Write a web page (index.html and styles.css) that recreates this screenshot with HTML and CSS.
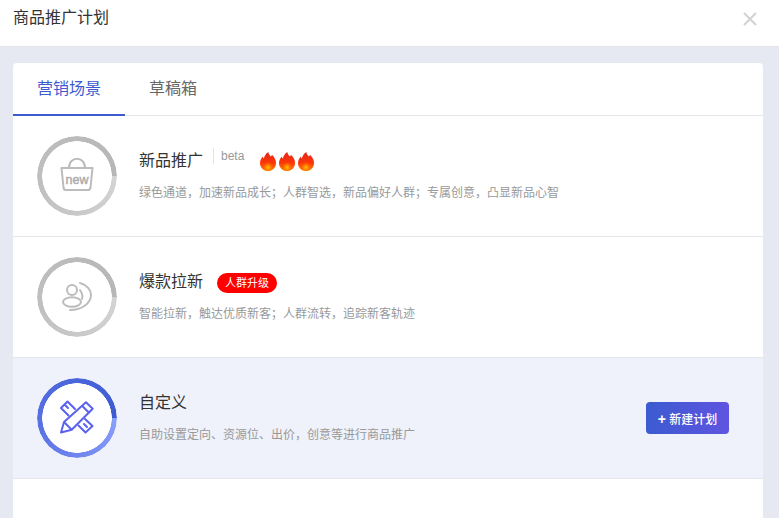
FILE: index.html
```html
<!DOCTYPE html>
<html lang="zh">
<head>
<meta charset="utf-8">
<title>商品推广计划</title>
<link rel="stylesheet" href="styles.css">
</head>
<body>
<svg class="defs" width="0" height="0" aria-hidden="true">
  <defs>
    <linearGradient id="flame" x1="0" y1="0" x2="0" y2="1">
      <stop offset="0" stop-color="#e5271c"/>
      <stop offset="0.55" stop-color="#fb3408"/>
      <stop offset="1" stop-color="#ff8000"/>
    </linearGradient>
    <radialGradient id="flame-core" cx="0.5" cy="0.6" r="0.55">
      <stop offset="0" stop-color="#ffc400"/>
      <stop offset="1" stop-color="#ff7a00" stop-opacity="0.2"/>
    </radialGradient>
    <symbol id="fire" viewBox="0 0 16 19">
      <path fill="url(#flame)" d="M8.300 0C8.600 2.200 10 3.400 11 4.600 11.500 4.100 11.800 3.500 11.900 2.800 14.300 5 16 7.600 16 10.900 16 15.400 12.500 19 8 19S0 15.400 0 10.900C0 8.300 1.200 6.200 2.700 4.400 2.900 5.300 3.200 6 3.800 6.600 4.300 4.200 5.900 1.500 8.300 0Z"/>
      <ellipse cx="8" cy="14.500" rx="4" ry="4.300" fill="url(#flame-core)"/>
    </symbol>
  </defs>
</svg>
<header class="topbar">
  <h1 class="title">商品推广计划</h1>
  <svg class="close" viewBox="0 0 14 14" width="14" height="14" aria-label="关闭"><path d="M1 1L13 13M13 1L1 13"/></svg>
</header>
<main class="card">
  <nav class="tabs">
    <a class="tab tab-active">营销场景</a>
    <a class="tab">草稿箱</a>
  </nav>

  <section class="row">
    <div class="ring ring-grey">
      <svg class="ring-icon" viewBox="0 0 40 40" width="40" height="40">
        <path class="ic-grey" d="M12 12C12 -0.500 28 -0.500 28 12"/>
        <path class="ic-grey" d="M4.500 12H35.500L33.500 31.500C33.300 33 32.400 34 31 34H9C7.600 34 6.700 33 6.500 31.500Z"/>
        <text class="new-text" x="20" y="27.500" text-anchor="middle">new</text>
      </svg>
    </div>
    <div class="info">
      <div class="head">
        <h2 class="name">新品推广</h2>
        <span class="beta">beta</span>
        <span class="fires">
          <svg class="fire" width="16" height="19"><use href="#fire"/></svg>
          <svg class="fire" width="16" height="19"><use href="#fire"/></svg>
          <svg class="fire" width="16" height="19"><use href="#fire"/></svg>
        </span>
      </div>
      <p class="desc">绿色通道，加速新品成长；人群智选，新品偏好人群；专属创意，凸显新品心智</p>
    </div>
  </section>

  <section class="row">
    <div class="ring ring-grey">
      <svg class="ring-icon" viewBox="0 0 40 40" width="40" height="40">
        <circle class="ic-grey" cx="15" cy="13" r="5"/>
        <ellipse class="ic-grey" cx="15" cy="25" rx="9" ry="4.800"/>
        <path class="ic-grey" d="M23 13C25 16 26 19 25 22"/>
        <path class="ic-grey" d="M23 6C30 8 34 13 34 18 34 26 25 33 13 33"/>
      </svg>
    </div>
    <div class="info">
      <div class="head">
        <h2 class="name">爆款拉新</h2>
        <span class="pill">人群升级</span>
      </div>
      <p class="desc">智能拉新，触达优质新客；人群流转，追踪新客轨迹</p>
    </div>
  </section>

  <section class="row row-active">
    <div class="ring ring-blue">
      <svg class="ring-icon" viewBox="0 0 40 40" width="40" height="40">
        <g class="ic-blue">
          <path d="M18 11L10.500 3.500 4 10 11.500 17.500M8 7L11 10"/>
          <path d="M28 21L35.500 28 28.500 34.500 21.500 27.500M27 26L30 29"/>
          <path d="M29 4.300L35.700 10.700 14.700 31.700 4 34.500 7 24ZM25.300 8L32 14.700M7 24L14.700 31.700"/>
        </g>
      </svg>
    </div>
    <div class="info">
      <div class="head">
        <h2 class="name">自定义</h2>
      </div>
      <p class="desc">自助设置定向、资源位、出价，创意等进行商品推广</p>
    </div>
    <button class="create" type="button"><span class="plus">+</span> 新建计划</button>
  </section>
</main>
</body>
</html>
```
FILE: styles.css
```css
* { box-sizing: border-box; }
html, body { margin: 0; height: 100%; overflow: hidden; }
body {
  background: #e6e9f2;
  font-family: "Liberation Sans", "Noto Sans CJK SC", sans-serif;
  color: #333;
}
.defs { position: absolute; }
.topbar {
  height: 47px;
  background: #fff;
  border-bottom: 1px solid #e3e5ea;
  display: flex;
  align-items: flex-start;
  justify-content: space-between;
  padding: 8px 22px 0 13px;
}
.title { margin: 0; font-size: 16px; font-weight: 400; line-height: 20px; color: #333; }
.close { margin-top: 4px; }
.close path { stroke: #d2d2d4; stroke-width: 2; fill: none; }
.card {
  margin: 16px 16px 0 13px;
  background: #fff;
  border-radius: 4px 4px 0 0;
  height: 460px;
}
.tabs { height: 53px; display: flex; border-bottom: 1px solid #e3e5ea; }
.tab {
  padding: 0 24px;
  height: 53px;
  text-align: center;
  font-size: 16px;
  line-height: 51px;
  color: #666;
}
.tab-active { color: #3c5bd0; border-bottom: 2px solid #3c5bd0; }
.row {
  height: 121px;
  border-bottom: 1px solid #e3e5ea;
  display: flex;
  align-items: center;
  padding: 0 34px 0 24px;
}
.row-active { background: #eff2fb; }
.ring {
  width: 80px;
  height: 80px;
  border-radius: 50%;
  display: flex;
  align-items: center;
  justify-content: center;
  flex: none;
  background: #fff;
  position: relative;
}
.ring::before {
  content: "";
  position: absolute;
  inset: 0;
  border-radius: 50%;
  -webkit-mask: radial-gradient(circle closest-side, transparent 34.500px, #000 35px);
  mask: radial-gradient(circle closest-side, transparent 34.500px, #000 35px);
}
.ring-grey::before { background: conic-gradient(from 90deg, #d4d4d4, #c0c0c0 45%, #b6b6b6); }
.ring-blue::before { background: conic-gradient(from 90deg, #8a9ffb, #5a72e4 45%, #3c5bd0); }
.ring-icon { display: block; position: relative; }
.ic-grey { fill: none; stroke: #bcbcbc; stroke-width: 2; stroke-linejoin: round; stroke-linecap: round; }
.new-text { font-family: "Liberation Sans", sans-serif; font-size: 12.500px; fill: #aaa; stroke: #aaa; stroke-width: 0.400; }
.ic-blue path { fill: none; stroke: #5a62ee; stroke-width: 2; stroke-linejoin: round; stroke-linecap: round; }
.info { margin-left: 22px; flex: 1; margin-top: -1px; }
.head { display: flex; align-items: center; height: 24px; }
.name { margin: 0; font-size: 16px; font-weight: 400; line-height: 24px; color: #333; }
.beta {
  margin: -10px 0 0 10px;
  padding-left: 7px;
  border-left: 1px solid #e3e5ea;
  font-size: 12px;
  line-height: 16px;
  color: #999;
}
.fires { display: flex; margin-left: 16px; }
.fire { display: block; margin-right: 3px; }
.pill {
  margin: 2px 0 0 14px;
  height: 20px;
  padding: 0 8px;
  border-radius: 10px;
  background: #fe0000;
  color: #fff;
  font-size: 11px;
  line-height: 20px;
}
.desc { margin: 11px 0 0; font-size: 12px; line-height: 18px; color: #999; }
.create {
  width: 83px;
  height: 32px;
  border: 0;
  border-radius: 4px;
  padding: 0;
  background: linear-gradient(90deg, #3c5bd0, #5f54e0);
  color: #fff;
  font-family: inherit;
  font-size: 12px;
  font-weight: 500;
}
.plus { font-size: 14px; font-weight: 700; }
```
